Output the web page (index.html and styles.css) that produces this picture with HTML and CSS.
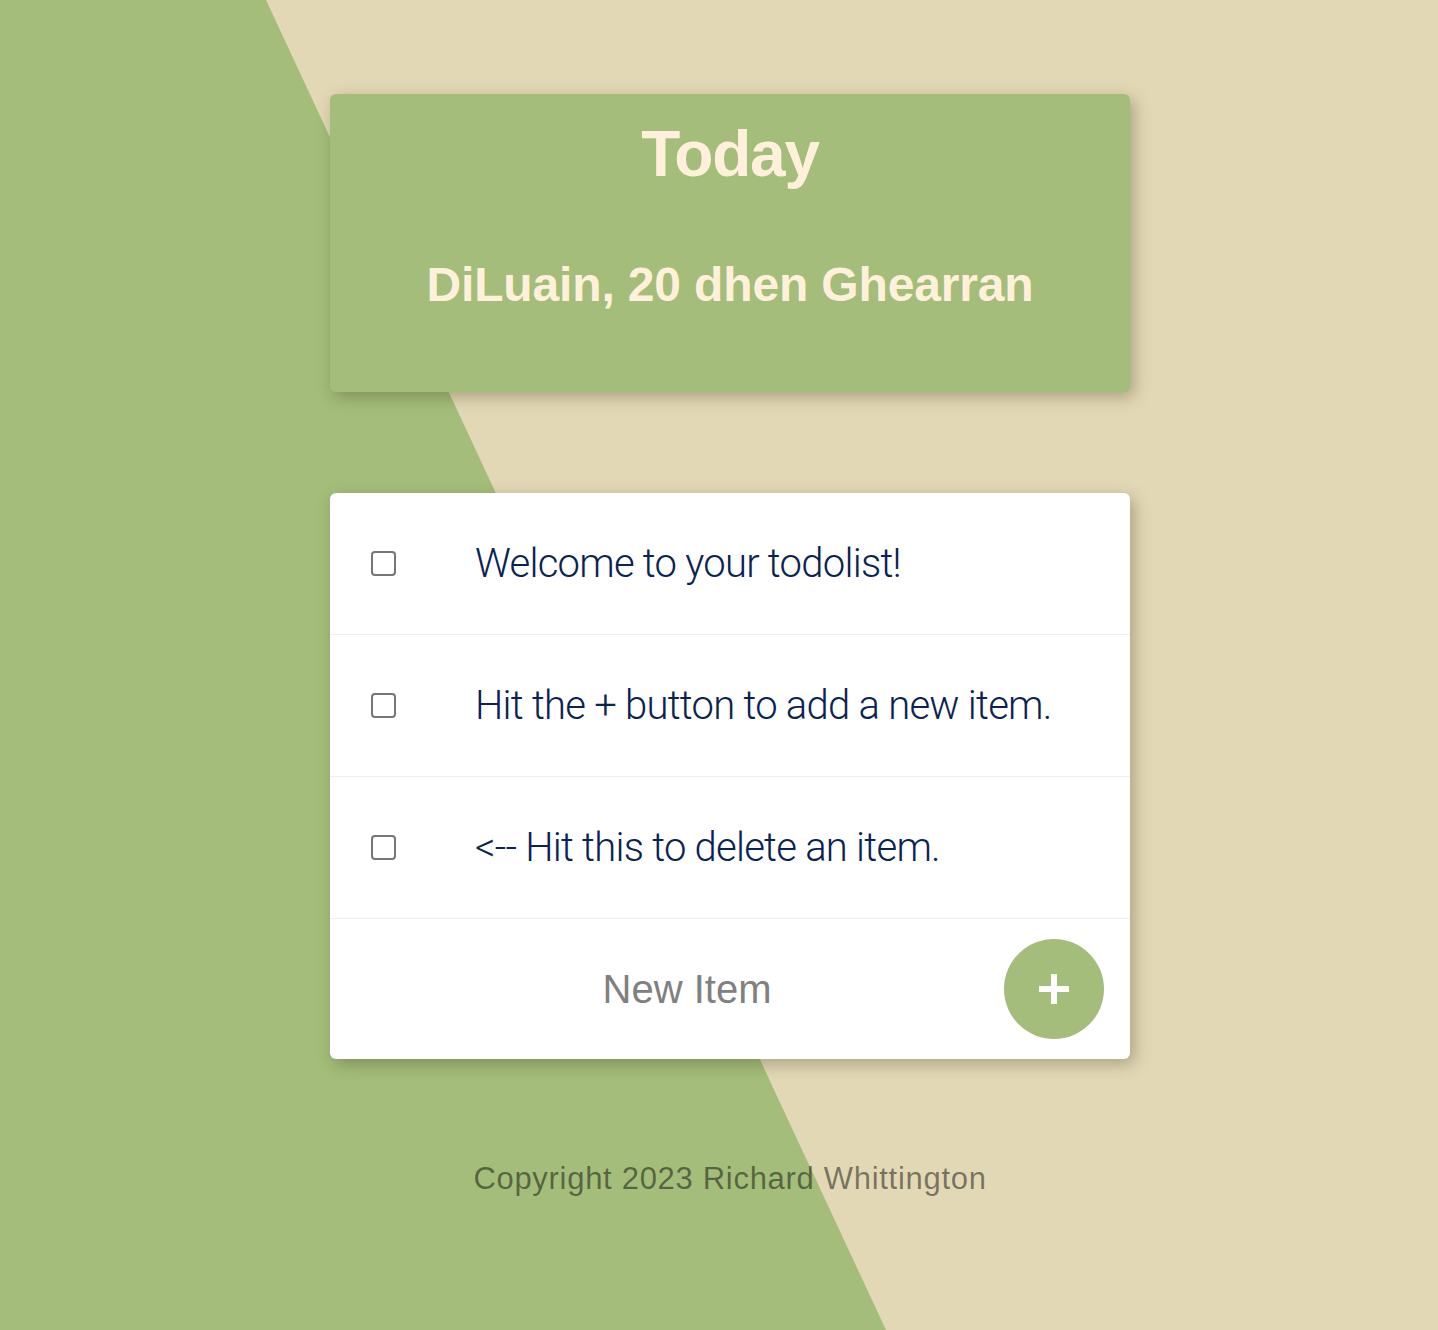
FILE: index.html
```html
<!DOCTYPE html>
<html lang="en">
<head>
<meta charset="utf-8">
<title>To Do List</title>
<link rel="stylesheet" href="styles.css">
</head>
<body>
<div class="bg-shape"></div>
<main class="page">
  <header class="heading-box">
    <h1 class="title">Today</h1>
    <h2 class="date">DiLuain, 20 dhen Ghearran</h2>
  </header>

  <section class="list-box">
    <div class="item">
      <input class="check" type="checkbox">
      <p class="item-text">Welcome to your todolist!</p>
    </div>
    <div class="item">
      <input class="check" type="checkbox">
      <p class="item-text">Hit the + button to add a new item.</p>
    </div>
    <div class="item">
      <input class="check" type="checkbox">
      <p class="item-text">&lt;-- Hit this to delete an item.</p>
    </div>
    <form class="item new-row">
      <input class="new-input" type="text" placeholder="New Item" autocomplete="off">
      <button class="add-btn" type="button" aria-label="Add">
        <svg width="30" height="30" viewBox="0 0 30 30"><rect x="0" y="12" width="30" height="6" fill="#fff"/><rect x="12" y="0" width="6" height="30" fill="#fff"/></svg>
      </button>
    </form>
  </section>

  <footer class="footer">
    <p>Copyright 2023 Richard Whittington</p>
  </footer>
</main>
</body>
</html>
```

FILE: styles.css
```css
html, body {
  margin: 0;
  padding: 0;
}

body {
  background: #e3d8b5;
  min-height: 1330px;
  font-family: "Liberation Sans", Arial, sans-serif;
  position: relative;
  overflow: hidden;
}

.bg-shape {
  position: absolute;
  left: 0;
  top: 0;
  width: 1438px;
  height: 1330px;
  background: #a4bd7a;
  clip-path: polygon(0 0, 266px 0, 886px 1330px, 0 1330px);
  z-index: 0;
}

.page {
  position: relative;
  z-index: 1;
  display: flex;
  flex-direction: column;
  align-items: center;
  padding: 94px 0 0 22px;
}

.heading-box {
  width: 800px;
  height: 298px;
  box-sizing: border-box;
  background: #a4bd7a;
  border-radius: 6px;
  box-shadow: 4px 5px 16px rgba(60, 60, 30, 0.35);
  padding-top: 28px;
  text-align: center;
  color: #fff0dc;
}

.title {
  margin: 0;
  font-size: 64px;
  line-height: 64px;
  font-weight: 700;
  letter-spacing: -1.2px;
}

.date {
  margin: 75px 0 0 0;
  font-size: 48px;
  line-height: 48px;
  font-weight: 700;
  letter-spacing: -0.15px;
}

.list-box {
  margin-top: 101px;
  width: 800px;
  background: #ffffff;
  border-radius: 6px;
  box-shadow: 4px 5px 16px rgba(60, 60, 30, 0.35);
  overflow: hidden;
}

.item {
  display: flex;
  align-items: center;
  height: 141px;
  border-bottom: 1px solid #efefef;
  padding-left: 41px;
}

.check {
  appearance: none;
  -webkit-appearance: none;
  width: 25px;
  height: 25px;
  box-sizing: border-box;
  border: 2px solid #767676;
  border-radius: 4px;
  margin: 0 79px 0 0;
  background: #fff;
}

.item-text {
  margin: 0;
  font-family: Roboto, "Liberation Sans", sans-serif;
  font-weight: 300;
  font-size: 40px;
  letter-spacing: -0.75px;
  color: #0a2352;
}

.new-row {
  border-bottom: none;
  padding-left: 0;
  margin: 0;
  height: 140px;
}

.new-input {
  width: 634px;
  padding: 0 0 0 40px;
  border: none;
  outline: none;
  font-family: "Liberation Sans", Arial, sans-serif;
  font-size: 40px;
  text-align: center;
  color: #333;
  background: transparent;
}

.new-input::placeholder {
  color: #808080;
}

.add-btn {
  width: 100px;
  height: 100px;
  border-radius: 50%;
  border: none;
  background: #a4bd7a;
  margin-left: auto;
  margin-right: 26px;
  display: flex;
  align-items: center;
  justify-content: center;
  padding: 0;
}

.footer {
  margin-top: 102px;
  text-align: center;
}

.footer p {
  margin: 0;
  font-size: 31px;
  letter-spacing: 0.7px;
  color: rgba(0, 0, 0, 0.47);
}
```
